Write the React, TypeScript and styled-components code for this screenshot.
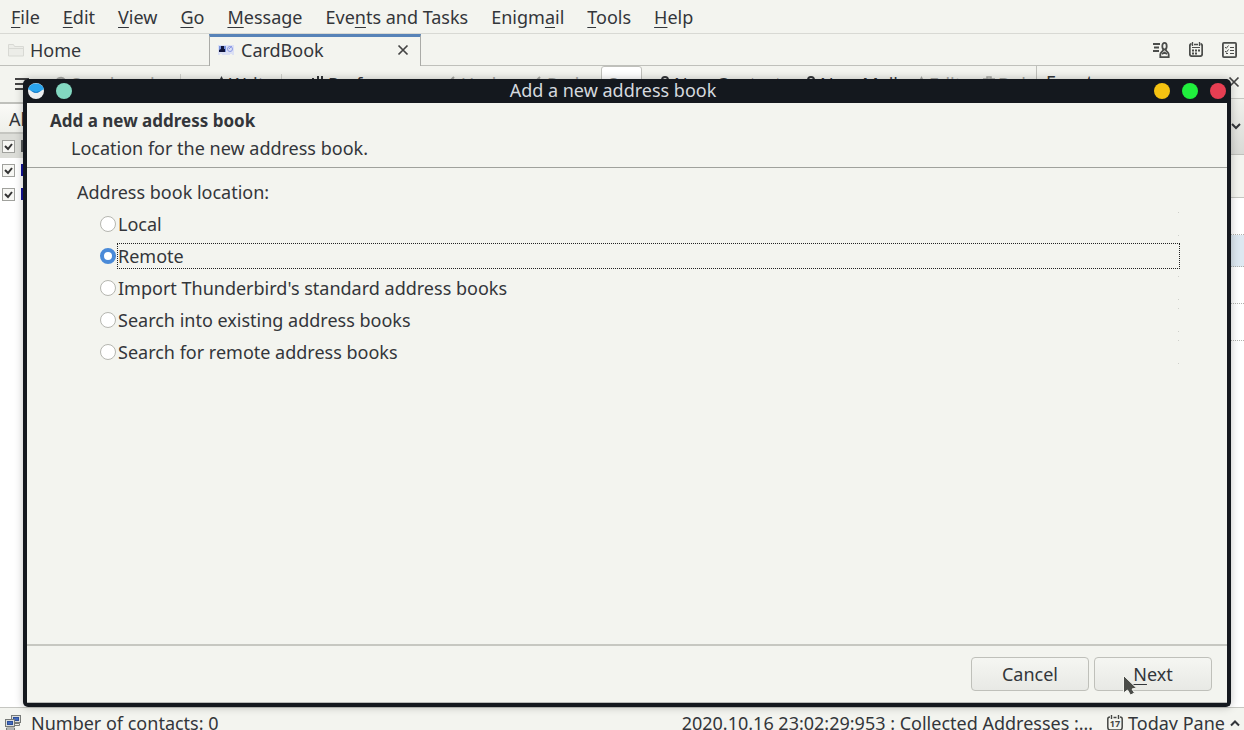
import React from 'react';
import styled, { createGlobalStyle, css } from 'styled-components';

const GlobalStyle = createGlobalStyle`
  * { box-sizing: border-box; }
  body {
    margin: 0;
    background: #f3f4ef;
    color: #33363a;
    font: 18px/24px "Noto Sans", "Open Sans", sans-serif;
    overflow: hidden;
  }
  button, input { font: inherit; color: inherit; }
`;

const Window = styled.div`
  position: relative;
  display: flex;
  flex-direction: column;
  height: 100vh;
  overflow: hidden;
  white-space: nowrap;
`;

const MenuBar = styled.nav`
  display: flex;
  gap: 23px;
  padding: 5px 11px 4px;
  border-bottom: 1px solid #d8d9d4;
`;

const MenuItem = styled.button`
  border: 0;
  padding: 0;
  background: none;
`;

const Key = styled.span`
  text-decoration: underline;
  text-decoration-thickness: 1px;
  text-underline-offset: 3px;
`;

const TabBar = styled.div`
  display: flex;
  height: 32px;
`;

const Tab = styled.div<{ $active?: boolean }>`
  display: flex;
  align-items: center;
  gap: 6px;
  width: ${p => (p.$active ? 212 : 209)}px;
  padding: 0 10px 0 8px;
  border-bottom: 1px solid #bfc0bb;
  ${p => p.$active && css`
    gap: 7px;
    border: 1px solid #aaaba7;
    border-top: 3px solid #5783b8;
    border-bottom: 0;
    padding: 0 11px 3px 8px;
  `}
`;

const TabTitle = styled.span`
  flex: 1;
`;

const IconButton = styled.button`
  display: flex;
  align-items: center;
  justify-content: center;
  padding: 0;
  border: 0;
  background: none;
`;

const TabTools = styled.div`
  flex: 1;
  display: flex;
  justify-content: flex-end;
  align-items: center;
  gap: 19px;
  padding-right: 7px;
  border-bottom: 1px solid #bfc0bb;
`;

const Workspace = styled.div`
  flex: 1;
  min-height: 0;
  display: grid;
  grid-template-columns: 1fr 208px;
`;

const MainPane = styled.div`
  min-width: 0;
  display: flex;
  flex-direction: column;
`;

const ToolBar = styled.div`
  display: flex;
  align-items: center;
  height: 38px;
  border-bottom: 2px solid #bfc0bb;
  padding-left: 15px;
  overflow: hidden;
`;

const Tool = styled.button<{ $width: number; $muted?: boolean }>`
  display: flex;
  align-items: center;
  flex: none;
  gap: 3px;
  width: ${p => p.$width}px;
  padding: 0;
  border: 0;
  background: none;
  color: ${p => (p.$muted ? '#a5a6a2' : '#33363a')};
`;

const Divider = styled.span<{ $after: number }>`
  flex: none;
  width: 1px;
  height: 20px;
  margin-right: ${p => p.$after}px;
  background: #cfd0cb;
`;

const SearchBox = styled.input`
  flex: none;
  width: 41px;
  height: 36px;
  margin-right: 17px;
  padding: 0 6px;
  border: 1px solid #bfc0bb;
  border-radius: 3px;
  background: #fff;
  &::placeholder { color: #8d8e8b; }
`;

const ColumnHead = styled.div`
  height: 30px;
  padding: 3px 9px;
  background: linear-gradient(#fafaf7, #eeefea);
  border-bottom: 2px solid #c5c6c1;
`;

const BookList = styled.div`
  flex: 1;
  background: #fff;
`;

const BookRow = styled.label<{ $selected?: boolean }>`
  display: flex;
  align-items: center;
  gap: 6px;
  height: 24px;
  padding-left: 2px;
  background: ${p => (p.$selected ? '#dcddd8' : 'none')};
`;

const Check = styled.input`
  appearance: none;
  flex: none;
  width: 13px;
  height: 13px;
  margin: 0;
  border: 1px solid #a0a19d;
  background: #f7f7f4 url("data:image/svg+xml,%3Csvg xmlns='http://www.w3.org/2000/svg' viewBox='0 0 11 11'%3E%3Cpath d='M2 5l3 3 4-5' fill='none' stroke='%23333' stroke-width='2'/%3E%3C/svg%3E");
`;

const Swatch = styled.span<{ $color: string }>`
  width: 16px;
  height: 12px;
  background: ${p => p.$color};
`;

const SidePane = styled.aside`
  display: flex;
  flex-direction: column;
  border-left: 1px solid #bfc0bb;
`;

const SideHead = styled.div`
  display: flex;
  align-items: center;
  height: 33px;
  padding: 0 4px 0 9px;
  border-bottom: 1px solid #c5c6c1;
`;

const SideTitle = styled.span`
  flex: 1;
`;

const DateBox = styled.div`
  display: flex;
  align-items: center;
  justify-content: flex-end;
  height: 56px;
  padding-right: 3px;
  background: linear-gradient(#f0f1ec, #d9dad6);
  border-bottom: 1px solid #bfc0bb;
`;

const NewEvent = styled.div`
  height: 43px;
  border-bottom: 1px solid #c5c6c1;
`;

const Agenda = styled.div`
  flex: 1;
  background: #fff;
`;

const AgendaRow = styled.div<{ $today?: boolean }>`
  height: ${p => (p.$today ? 32 : 37)}px;
  border-bottom: 1px dotted #b0b1ad;
  background: ${p => (p.$today ? '#dde8f1' : 'none')};
`;

const StatusBar = styled.footer`
  display: flex;
  align-items: flex-start;
  height: 23px;
  padding: 3px 4px 0 5px;
  border-top: 1px solid #c5c6c1;
  overflow: hidden;
`;

const StatusIcon = styled.span`
  display: flex;
  margin: 4px 10px 0 0;
`;

const StatusText = styled.span`
  flex: 1;
`;

const TodayButton = styled.button`
  display: flex;
  align-items: center;
  gap: 5px;
  margin-left: 14px;
  padding: 0;
  border: 0;
  background: none;
`;

const Dialog = styled.section`
  position: absolute;
  top: 79px;
  right: 13px;
  bottom: 23px;
  left: 23px;
  display: flex;
  flex-direction: column;
  border: 4px solid #14181e;
  border-top: 0;
  border-radius: 5px;
  background: #f3f4ef;
  box-shadow: 0 0 8px rgba(0, 0, 0, 0.25);
`;

const TitleBar = styled.header`
  display: flex;
  align-items: center;
  gap: 12px;
  height: 24px;
  padding: 0 1px;
  background: #14181e;
  color: #d5d9df;
`;

const TitleText = styled.h1`
  flex: 1;
  margin: 0;
  padding-bottom: 2px;
  font-size: 18px;
  line-height: 24px;
  font-weight: 400;
  text-align: center;
`;

const Dot = styled.button<{ $color: string }>`
  width: 16px;
  height: 16px;
  padding: 0;
  border: 0;
  border-radius: 50%;
  background: ${p => p.$color};
`;

const DialogHead = styled.div`
  padding: 6px 23px;
  border-bottom: 1px solid #9fa19c;
`;

const Heading = styled.h2`
  margin: 0;
  font-size: 17px;
  line-height: 24px;
  font-weight: 700;
`;

const Subheading = styled.p`
  margin: 3px 0 1px 21px;
`;

const Choices = styled.fieldset`
  flex: 1;
  display: flex;
  flex-direction: column;
  gap: 6px;
  margin: 0;
  padding: 12px 47px 0 50px;
  border: 0;
`;

const Legend = styled.legend`
  float: left;
  margin: 0 0 1px;
  padding: 0;
`;

const Choice = styled.div`
  display: flex;
  align-items: center;
  gap: 1px;
  margin-left: 23px;
`;

const Radio = styled.input`
  appearance: none;
  flex: none;
  width: 16px;
  height: 16px;
  margin: 0;
  border: 1px solid #b5b6b0;
  border-radius: 50%;
  background: #fff;
  &:checked { border: 4px solid #4a8ad8; }
`;

const ChoiceLabel = styled.label`
  position: relative;
  flex: 1;
  border: 1px dotted transparent;
  ${Radio}:checked + & { border-color: #222; }
  ${Radio}:not(:checked) + &::after {
    content: "";
    position: absolute;
    top: 0;
    right: 0;
    bottom: 0;
    width: 1px;
    border: solid #cfd0cb;
    border-width: 1px 0;
  }
`;

const Actions = styled.div`
  display: flex;
  justify-content: flex-end;
  gap: 5px;
  padding: 11px 15px;
  border-top: 2px solid #c6c7c1;
  border-bottom: 1px solid #b9bab8;
`;

const Button = styled.button`
  position: relative;
  width: 118px;
  height: 34px;
  padding: 0;
  border: 1px solid #bfc0ba;
  border-radius: 4px;
  background: linear-gradient(#f5f6f2, #e8e9e5);
`;

const Pointer = styled.svg`
  position: absolute;
  top: 17px;
  left: 28px;
`;

const FolderIcon = () => (
  <svg width="16" height="14" viewBox="0 0 16 14" fill="#ecede8" stroke="#d8d9d4">
    <path d="M.5 13V1.500h5l1 2h9V13z" />
    <path d="M.5 5.500h15" />
  </svg>
);

const CardIcon = () => (
  <svg width="16" height="12" viewBox="0 0 16 12">
    <path d="M0 1h16v10h-2v-1h-2v1H4v-1H2v1H0z" fill="#dbe0f4" />
    <path d="M1 2h7v6H1z" fill="#7a94dd" />
    <path d="M3 2h3v3h1v3H1V6l2-1z" fill="#10153c" />
    <circle cx="12" cy="5" r="2.500" fill="none" stroke="#8b9ae6" />
    <path d="M11 5l3-3" stroke="#8b9ae6" />
  </svg>
);

const CloseIcon = () => (
  <svg width="12" height="12" viewBox="0 0 12 12" stroke="#444" strokeWidth="1.700">
    <path d="M1.500 1.500l9 9M10.500 1.500l-9 9" />
  </svg>
);

const ContactsIcon = () => (
  <svg width="17" height="16" viewBox="0 0 17 16" fill="none" stroke="#4b4d4b" strokeWidth="1.800">
    <path d="M0 2h7M1 5.500h5M0 9h6" strokeWidth="2" />
    <ellipse cx="11.500" cy="4.200" rx="2.200" ry="3.300" />
    <path d="M10.300 7.500c0 2-3 2.500-3 5v2.600h8.400v-2.600c0-2.500-3-3-3-5" />
    <path d="M9 12l2.500-1.500L14 12" />
  </svg>
);

const CalendarIcon = () => (
  <svg width="14" height="15" viewBox="0 0 14 15" fill="none" stroke="#4b4d4b">
    <path d="M3.500 0v4M10.500 0v4M5 2.500h4" strokeWidth="1.300" />
    <path d="M2.500 2C1 2 .8 3 .8 4v8c0 1.500.7 2.200 2.200 2.200h8c1.500 0 2.200-.7 2.200-2.200V4c0-1-.2-2-1.700-2" strokeWidth="1.800" />
    <path d="M3 5.500h8" />
    <path d="M3 8.500h8M3 11.500h5" strokeWidth="2" strokeDasharray="2 1" />
  </svg>
);

const TasksIcon = () => (
  <svg width="15" height="16" viewBox="0 0 15 16" fill="none" stroke="#4b4d4b">
    <rect x=".9" y=".9" width="13.200" height="14.200" rx="1" strokeWidth="1.800" />
    <path d="M3 5l1.300 1.300L6.500 3.500M3 9l1.300 1.300 2.200-2.800M8 5.500h4M8 8.500h4M8 11.500h4M4 11.500h2" />
  </svg>
);

const ChevronIcon = ({ up }: { up?: boolean }) => (
  <svg width="10" height="7" viewBox="0 0 10 7" fill="none" stroke="#33363a" strokeWidth="2">
    <path d={up ? 'M1 5.500l4-4 4 4' : 'M1 1l4 4 4-4'} />
  </svg>
);

const MenuIcon = () => (
  <svg width="14" height="12" viewBox="0 0 14 12" stroke="#444" strokeWidth="2">
    <path d="M0 1h14M0 6h14M0 11h14" />
  </svg>
);

const RoundIcon = () => (
  <svg width="14" height="16" viewBox="0 0 14 16" fill="none" stroke="currentColor" strokeWidth="2">
    <path d="M2 6a5 5 0 0 1 9-2v3M12 10a5 5 0 0 1-9 2" />
  </svg>
);

const PenIcon = () => (
  <svg width="9" height="16" viewBox="0 0 9 16" fill="currentColor">
    <path d="M4.500 0L7 5v8H2V5z" />
  </svg>
);

const SlidersIcon = () => (
  <svg width="15" height="16" viewBox="0 0 15 16" stroke="currentColor" strokeWidth="2">
    <path d="M3 2v14M8 0v16M12 0v16" />
  </svg>
);

const ArrowIcon = () => (
  <svg width="10" height="16" viewBox="0 0 10 16" fill="none" stroke="currentColor" strokeWidth="2">
    <path d="M6 1L1 6l5 5" />
  </svg>
);

const PersonIcon = () => (
  <svg width="12" height="16" viewBox="0 0 12 16" fill="none" stroke="currentColor" strokeWidth="2">
    <circle cx="6" cy="4" r="3" />
    <path d="M1 15c0-7 10-7 10 0" />
  </svg>
);

const TrashIcon = () => (
  <svg width="12" height="16" viewBox="0 0 12 16" fill="none" stroke="currentColor" strokeWidth="1.500">
    <path d="M0 3h12M4 3V1h4v2M2 3v12h8V3" />
  </svg>
);

const ComputersIcon = () => (
  <svg width="16" height="16" viewBox="0 0 16 16" stroke="#777a78">
    <rect x="6.500" y=".5" width="9" height="7" fill="#dcdedb" />
    <rect x="8.500" y="2.500" width="5" height="3" fill="#4169bd" stroke="#2e4f98" />
    <path d="M8.500 8.500h6v2h-6z" fill="#eee" />
    <rect x=".5" y="4.500" width="9" height="7" fill="#dcdedb" />
    <rect x="2.500" y="6.500" width="5" height="3" fill="#4169bd" stroke="#2e4f98" />
    <path d="M1.500 13h8v2h-8z" fill="#eee" />
  </svg>
);

const DayIcon = () => (
  <svg width="16" height="16" viewBox="0 0 16 16" fill="none" stroke="#444643">
    <path d="M3 2C1.500 2 .8 2.500.8 4v8c0 2 .8 3 2.200 3h10c1.500 0 2.200-1 2.200-3V4c0-1.500-.7-2-2.200-2" strokeWidth="1.500" />
    <path d="M4.500 0v4M11.500 0v4M6.500 2.500h3" strokeWidth="1.400" />
    <text x="8" y="12" textAnchor="middle" fontSize="9" fontWeight="700" fill="#444643" stroke="none">17</text>
  </svg>
);

const MailLogo = () => (
  <svg width="16" height="16" viewBox="0 0 16 16">
    <circle cx="8" cy="8" r="8" fill="#eceef0" />
    <path d="M0 6C2 2 4 .6 8 .6S14 2 16 6L12 8.500 8 10 4 8.500z" fill="#2aa5ee" />
    <path d="M3 7.500l5 1.500 5-1.500-3 2.300H6z" fill="#1878c4" />
  </svg>
);

const menus: [string, string, string][] = [
  ['', 'F', 'ile'],
  ['', 'E', 'dit'],
  ['', 'V', 'iew'],
  ['', 'G', 'o'],
  ['', 'M', 'essage'],
  ['Eve', 'n', 'ts and Tasks'],
  ['Enigm', 'a', 'il'],
  ['', 'T', 'ools'],
  ['', 'H', 'elp'],
];

const locations = [
  'Local',
  'Remote',
  "Import Thunderbird's standard address books",
  'Search into existing address books',
  'Search for remote address books',
];

export default function App() {
  return (
    <>
      <GlobalStyle />
      <Window>
        <MenuBar>
          {menus.map(([before, key, after]) => (
            <MenuItem key={before + key + after}>{before}<Key>{key}</Key>{after}</MenuItem>
          ))}
        </MenuBar>
        <TabBar>
          <Tab><FolderIcon /><TabTitle>Home</TabTitle></Tab>
          <Tab $active>
            <CardIcon />
            <TabTitle>CardBook</TabTitle>
            <IconButton aria-label="Close tab"><CloseIcon /></IconButton>
          </Tab>
          <TabTools>
            <IconButton aria-label="Contacts"><ContactsIcon /></IconButton>
            <IconButton aria-label="Calendar"><CalendarIcon /></IconButton>
            <IconButton aria-label="Tasks"><TasksIcon /></IconButton>
          </TabTools>
        </TabBar>
        <Workspace>
          <MainPane>
            <ToolBar>
              <Tool $width={39} aria-label="Menu"><MenuIcon /></Tool>
              <Tool $width={126} $muted><RoundIcon />Synchronize</Tool>
              <Divider $after={36} />
              <Tool $width={64}><PenIcon />Write</Tool>
              <Divider $after={28} />
              <Tool $width={138}><SlidersIcon />Preferences</Tool>
              <Tool $width={86} $muted><ArrowIcon />Undo</Tool>
              <Tool $width={67} $muted><ArrowIcon />Redo</Tool>
              <SearchBox aria-label="Search" placeholder="Search" />
              <Tool $width={146}><PersonIcon />New Contact</Tool>
              <Tool $width={112}><PersonIcon />New Mail</Tool>
              <Tool $width={66} $muted><PenIcon />Edit</Tool>
              <Tool $width={54} $muted><TrashIcon />Del</Tool>
            </ToolBar>
            <ColumnHead>All</ColumnHead>
            <BookList>
              <BookRow $selected><Check type="checkbox" defaultChecked aria-label="All" /><Swatch $color="#55585a" /></BookRow>
              <BookRow><Check type="checkbox" defaultChecked aria-label="Personal" /><Swatch $color="#14149a" /></BookRow>
              <BookRow><Check type="checkbox" defaultChecked aria-label="Collected" /><Swatch $color="#14149a" /></BookRow>
            </BookList>
          </MainPane>
          <SidePane>
            <SideHead>
              <SideTitle>Events</SideTitle>
              <IconButton aria-label="Close pane"><CloseIcon /></IconButton>
            </SideHead>
            <DateBox><ChevronIcon /></DateBox>
            <NewEvent />
            <Agenda>
              <AgendaRow />
              <AgendaRow $today />
              <AgendaRow />
              <AgendaRow />
            </Agenda>
          </SidePane>
        </Workspace>
        <StatusBar>
          <StatusIcon><ComputersIcon /></StatusIcon>
          <StatusText>Number of contacts: 0</StatusText>
          <span>2020.10.16 23:02:29:953 : Collected Addresses :…</span>
          <TodayButton><DayIcon />Today Pane<ChevronIcon up /></TodayButton>
        </StatusBar>

        <Dialog role="dialog" aria-labelledby="dialog-title">
          <TitleBar>
            <MailLogo />
            <Dot $color="#83d8c1" aria-label="Pin" />
            <TitleText id="dialog-title">Add a new address book</TitleText>
            <Dot $color="#f5c211" aria-label="Minimize" />
            <Dot $color="#20ef3d" aria-label="Maximize" />
            <Dot $color="#e63e52" aria-label="Close" />
          </TitleBar>
          <DialogHead>
            <Heading>Add a new address book</Heading>
            <Subheading>Location for the new address book.</Subheading>
          </DialogHead>
          <Choices>
            <Legend>Address book location:</Legend>
            {locations.map((name, i) => (
              <Choice key={name}>
                <Radio type="radio" name="location" id={`location-${i}`} defaultChecked={i === 1} />
                <ChoiceLabel htmlFor={`location-${i}`}>{name}</ChoiceLabel>
              </Choice>
            ))}
          </Choices>
          <Actions>
            <Button>Cancel</Button>
            <Button>
              <Key>N</Key>ext
              <Pointer width="14" height="22" viewBox="0 0 14 22" fill="#4b4d49" stroke="#f3f4ef" strokeWidth="1">
                <path d="M.5 .5v17.500l4-3 3 5 4-2-2.500-4 4.500-1z" />
              </Pointer>
            </Button>
          </Actions>
        </Dialog>
      </Window>
    </>
  );
}
